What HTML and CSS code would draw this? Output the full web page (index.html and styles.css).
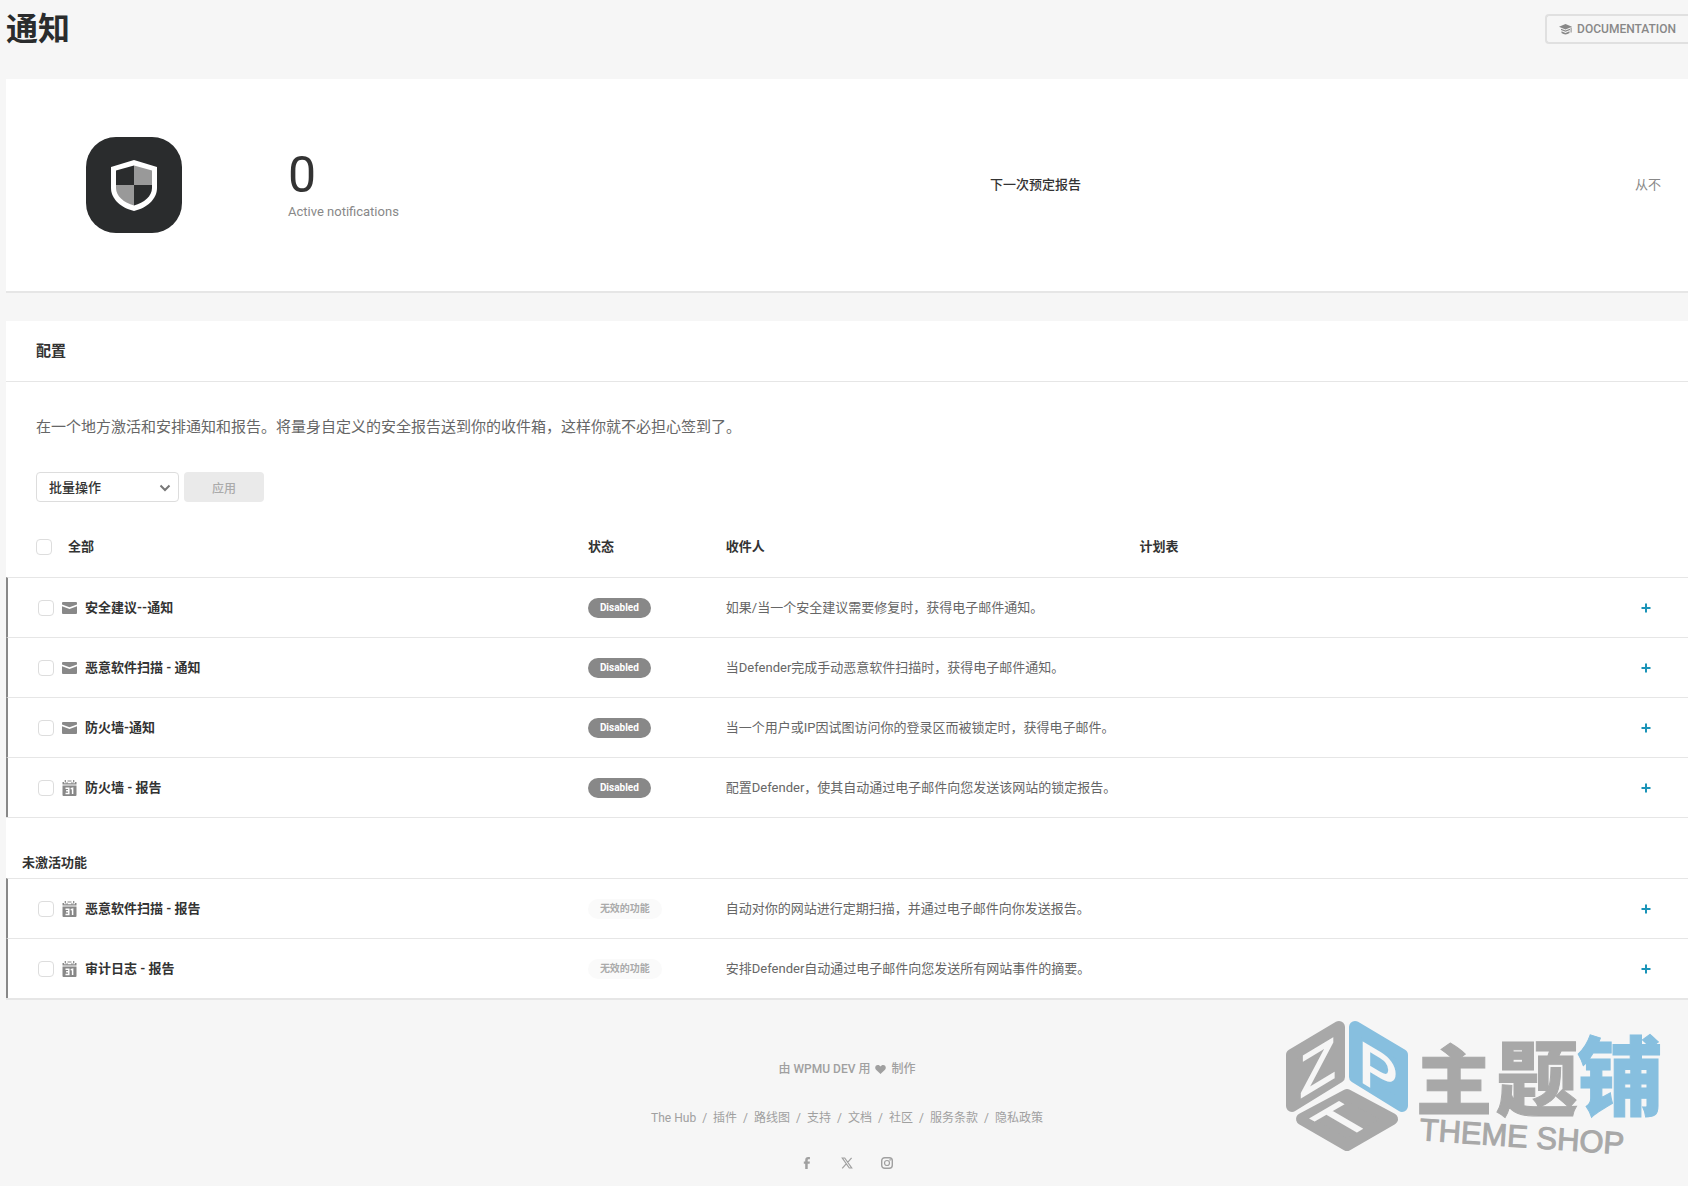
FILE: index.html
```html
<!DOCTYPE html>
<html lang="zh-CN">
<head>
  <meta charset="UTF-8">
  <meta name="viewport" content="width=device-width, initial-scale=1.0">
  <title>通知</title>
  <link rel="stylesheet" href="styles.css">
</head>
<body>
  <!-- shared icons -->
  <svg class="sprite" aria-hidden="true">
    <symbol id="icon-mail" viewBox="0 0 15 12">
      <path d="M1 0h13a1 1 0 0 1 1 1v1.600L7.500 5.200 0 2.600V1a1 1 0 0 1 1-1z"/>
      <path d="M0 4.200l7.500 2.700L15 4.200V11a1 1 0 0 1-1 1H1a1 1 0 0 1-1-1z"/>
    </symbol>
    <symbol id="icon-calendar" viewBox="0 0 14 16">
      <path d="M0 2h1.500v1.300h2.600V2H5v1.300h4V2h.9v1.300h2.600V2H14v2.500H0z"/>
      <path d="M2.200 0h1.200v2.500H2.200zM10.600 0h1.200v2.500h-1.200zM5 .6h4v1H5z"/>
      <path d="M0 5.500h14V15a1 1 0 0 1-1 1H1a1 1 0 0 1-1-1z"/>
      <path d="M3 8.200h3.300v5.200H3M3.600 10.800h2.700M8.200 8.700l1.900-.5v5.900" fill="none" stroke="#fff" stroke-width="1.500"/>
    </symbol>
    <symbol id="icon-plus" viewBox="0 0 10 10">
      <path d="M4 .5h2V4h3.500v2H6v3.500H4V6H.5V4H4z"/>
    </symbol>
  </svg>

  <header class="page-header">
    <h1>通知</h1>
    <a class="doc-button" href="#">
      <svg width="13" height="11" viewBox="0 0 13 11" aria-hidden="true">
        <path d="M6.500 0L13 2.800 6.500 5.600 0 2.800z"/>
        <path d="M2 4.700l4.500 1.900L11 4.700v1.200L6.500 7.800 2 5.900zM2.500 7.200l4 1.700 4-1.700v1.900c-2.400 1.900-5.600 1.900-8 0zM11.600 3.600h1v5h-1z"/>
      </svg>
      DOCUMENTATION
    </a>
  </header>

  <main>
    <section class="box summary">
      <svg class="summary-logo" viewBox="0 0 96 96" aria-hidden="true">
        <rect width="96" height="96" rx="30" fill="#2a2c2d"/>
        <path d="M48 23l23 7v21c0 11-10 20-23 23-13-3-23-12-23-23V30z" fill="#fff"/>
        <path d="M48 28.500V48H30V33.500z" fill="#2a2c2d"/>
        <path d="M48 28.500l18 5V48H48z" fill="#999"/>
        <path d="M30 48h18v20.500C38 66 30 59 30 51z" fill="#999"/>
        <path d="M66 48H48v20.500C58 66 66 59 66 51z" fill="#2a2c2d"/>
      </svg>
      <div class="summary-count">
        <span class="summary-large">0</span>
        <span class="summary-sub">Active notifications</span>
      </div>
      <div class="summary-next">
        <strong>下一次预定报告</strong>
        <span>从不</span>
      </div>
    </section>

    <section class="box">
      <div class="box-header">
        <h2>配置</h2>
      </div>
      <div class="box-body">
        <p>在一个地方激活和安排通知和报告。将量身自定义的安全报告送到你的收件箱，这样你就不必担心签到了。</p>
        <form class="bulk">
          <div class="select-wrap">
            <select aria-label="批量操作">
              <option>批量操作</option>
            </select>
            <svg width="12" height="8" viewBox="0 0 12 8" aria-hidden="true">
              <path d="M1.500 1.500L6 6l4.500-4.500" fill="none" stroke="#777" stroke-width="2"/>
            </svg>
          </div>
          <button class="apply" type="button" disabled>应用</button>
        </form>
      </div>

      <table class="notifications">
        <colgroup>
          <col class="col-name">
          <col class="col-status">
          <col class="col-recipients">
          <col>
        </colgroup>
        <thead>
          <tr>
            <th><label class="check-all"><input type="checkbox">全部</label></th>
            <th>状态</th>
            <th>收件人</th>
            <th>计划表</th>
          </tr>
        </thead>
        <tbody>
          <tr class="item">
            <td><label class="name"><input type="checkbox"><svg width="15" height="12" aria-hidden="true"><use href="#icon-mail"/></svg>安全建议--通知</label></td>
            <td><span class="tag">Disabled</span></td>
            <td colspan="2"><div class="detail">如果/当一个安全建议需要修复时，获得电子邮件通知。<button type="button" aria-label="添加"><svg width="10" height="10"><use href="#icon-plus"/></svg></button></div></td>
          </tr>
          <tr class="item">
            <td><label class="name"><input type="checkbox"><svg width="15" height="12" aria-hidden="true"><use href="#icon-mail"/></svg>恶意软件扫描 - 通知</label></td>
            <td><span class="tag">Disabled</span></td>
            <td colspan="2"><div class="detail">当Defender完成手动恶意软件扫描时，获得电子邮件通知。<button type="button" aria-label="添加"><svg width="10" height="10"><use href="#icon-plus"/></svg></button></div></td>
          </tr>
          <tr class="item">
            <td><label class="name"><input type="checkbox"><svg width="15" height="12" aria-hidden="true"><use href="#icon-mail"/></svg>防火墙-通知</label></td>
            <td><span class="tag">Disabled</span></td>
            <td colspan="2"><div class="detail">当一个用户或IP因试图访问你的登录区而被锁定时，获得电子邮件。<button type="button" aria-label="添加"><svg width="10" height="10"><use href="#icon-plus"/></svg></button></div></td>
          </tr>
          <tr class="item">
            <td><label class="name"><input type="checkbox"><svg width="15" height="16" aria-hidden="true"><use href="#icon-calendar"/></svg>防火墙 - 报告</label></td>
            <td><span class="tag">Disabled</span></td>
            <td colspan="2"><div class="detail">配置Defender，使其自动通过电子邮件向您发送该网站的锁定报告。<button type="button" aria-label="添加"><svg width="10" height="10"><use href="#icon-plus"/></svg></button></div></td>
          </tr>
        </tbody>
        <tbody>
          <tr class="group">
            <th colspan="4">未激活功能</th>
          </tr>
          <tr class="item">
            <td><label class="name"><input type="checkbox"><svg width="15" height="16" aria-hidden="true"><use href="#icon-calendar"/></svg>恶意软件扫描 - 报告</label></td>
            <td><span class="tag tag-inactive">无效的功能</span></td>
            <td colspan="2"><div class="detail">自动对你的网站进行定期扫描，并通过电子邮件向你发送报告。<button type="button" aria-label="添加"><svg width="10" height="10"><use href="#icon-plus"/></svg></button></div></td>
          </tr>
          <tr class="item">
            <td><label class="name"><input type="checkbox"><svg width="15" height="16" aria-hidden="true"><use href="#icon-calendar"/></svg>审计日志 - 报告</label></td>
            <td><span class="tag tag-inactive">无效的功能</span></td>
            <td colspan="2"><div class="detail">安排Defender自动通过电子邮件向您发送所有网站事件的摘要。<button type="button" aria-label="添加"><svg width="10" height="10"><use href="#icon-plus"/></svg></button></div></td>
          </tr>
        </tbody>
      </table>
    </section>
  </main>

  <footer class="page-footer">
    <p class="made-by">由 WPMU DEV 用
      <svg width="11" height="9" viewBox="0 0 11 9" aria-hidden="true"><path d="M5.500 9L1 4.800C-.6 3 .3 0 2.800 0c1.200 0 2.200.6 2.700 1.500C6 .6 7 0 8.200 0c2.500 0 3.400 3 1.800 4.800z"/></svg>
      制作</p>
    <nav class="footer-nav">
      <a href="#">The Hub</a>/<a href="#">插件</a>/<a href="#">路线图</a>/<a href="#">支持</a>/<a href="#">文档</a>/<a href="#">社区</a>/<a href="#">服务条款</a>/<a href="#">隐私政策</a>
    </nav>
    <div class="social">
      <a href="#" aria-label="Facebook"><svg width="12" height="12" viewBox="0 0 12 12"><path d="M4.200 12V6.800H2.800V4.600h1.400V3.200C4.200 1.200 5.300 0 7.200 0h1.700v2.200H7.700c-.8 0-1 .4-1 1v1.400h2.200l-.3 2.200H6.700V12z"/></svg></a>
      <a href="#" aria-label="X"><svg width="12" height="12" viewBox="0 0 12 12"><path d="M1.300 1h2.400l7 10H8.300zM10.600 .8L6.700 5.300M5.200 6.800L1.200 11.300" fill="none" stroke="currentColor" stroke-width="1.200"/></svg></a>
      <a href="#" aria-label="Instagram"><svg width="12" height="12" viewBox="0 0 12 12"><rect x=".7" y=".7" width="10.600" height="10.600" rx="3" fill="none" stroke="currentColor" stroke-width="1.400"/><circle cx="6" cy="6" r="2.500" fill="none" stroke="currentColor" stroke-width="1.200"/><circle cx="9.100" cy="2.900" r=".8"/></svg></a>
    </div>
  </footer>

  <!-- theme shop logo over the page corner -->
  <svg class="shop-logo" viewBox="0 0 390 160" width="390" height="160" role="img" aria-label="主题铺 THEME SHOP">
    <g stroke-width="12" stroke-linejoin="round">
      <path d="M59 17L12 45v51l47-29z" fill="#a8a8a8" stroke="#a8a8a8"/>
      <path d="M75 17l47 28v51L75 67z" fill="#87bfdf" stroke="#87bfdf"/>
      <path d="M67 85l45 24-45 26-45-26z" fill="#a8a8a8" stroke="#a8a8a8"/>
    </g>
    <g class="cube-letters">
      <text transform="translate(20 88) skewY(-31)">Z</text>
      <text transform="translate(79 70) skewY(31)">P</text>
      <text transform="matrix(.86 -.5 .86 .5 64 129)">T</text>
    </g>
    <g class="shop-name">
      <text x="136" y="99" font-size="76">主</text>
      <text x="216" y="99" font-size="82">题</text>
      <text class="blue" x="297" y="99" font-size="86">铺</text>
    </g>
    <text class="shop-sub" transform="translate(139 130) rotate(4)">THEME SHOP</text>
  </svg>
</body>
</html>
```
FILE: styles.css
```css
* {
  box-sizing: border-box;
}

body {
  position: relative;
  margin: 0;
  padding-left: 6px;
  background: #f6f6f6;
  color: #666;
  font-family: Roboto, "Noto Sans CJK SC", sans-serif;
  font-size: 13px;
  line-height: 20px;
}

h1, h2, p {
  margin: 0;
}

a {
  color: inherit;
  text-decoration: none;
}

svg {
  display: block;
  flex-shrink: 0;
  fill: currentColor;
}

button, select {
  font-family: inherit;
}

.sprite {
  position: absolute;
  width: 0;
  height: 0;
}

/* header */
.page-header {
  display: flex;
  justify-content: space-between;
  align-items: flex-start;
  height: 79px;
}

.page-header h1 {
  padding-top: 9px;
  color: #2a2c2d;
  font-size: 32px;
  line-height: 40px;
}

.doc-button {
  display: flex;
  align-items: center;
  gap: 5px;
  height: 30px;
  margin-top: 14px;
  padding: 0 12px;
  border: 2px solid #e0e0e0;
  border-right: 0;
  border-radius: 4px 0 0 4px;
  color: #888;
  font-size: 12px;
  font-weight: 500;
}

/* boxes */
.box {
  margin-bottom: 30px;
  background: #fff;
  box-shadow: 0 2px 0 #e6e6e6;
}

.summary {
  display: flex;
  align-items: center;
  height: 212px;
  padding: 0 27px 0 80px;
}

.summary-logo {
  width: 96px;
  height: 96px;
}

.summary-count {
  display: flex;
  flex: 1;
  flex-direction: column;
  padding-left: 106px;
}

.summary-large {
  color: #333;
  font-size: 50px;
  line-height: 54px;
}

.summary-sub {
  color: #888;
}

.summary-next {
  display: flex;
  justify-content: space-between;
  width: 42.6%;
  color: #888;
}

.summary-next strong {
  color: #333;
  font-weight: 500;
}

.box-header {
  padding: 20px 30px;
  border-bottom: 1px solid #e6e6e6;
}

.box-header h2 {
  color: #333;
  font-size: 15px;
  line-height: 20px;
}

.box-body {
  padding: 30px 30px 15px;
}

.box-body p {
  font-size: 15px;
  line-height: 30px;
}

/* bulk actions */
.bulk {
  display: flex;
  gap: 5px;
  margin-top: 30px;
}

.select-wrap {
  position: relative;
  width: 143px;
}

.select-wrap svg {
  position: absolute;
  top: 12px;
  right: 8px;
  pointer-events: none;
}

.bulk select {
  width: 100%;
  height: 30px;
  padding: 0 12px;
  border: 1px solid #ddd;
  border-radius: 4px;
  background: #fff;
  color: #333;
  font-size: 13px;
  font-weight: 500;
  appearance: none;
}

.apply {
  width: 80px;
  height: 30px;
  border: 0;
  border-radius: 4px;
  background: #eaeaea;
  color: #aaa;
  font-size: 12px;
  font-weight: 500;
}

/* notification table */
.notifications {
  width: 100%;
  border-spacing: 0;
  table-layout: fixed;
}

.col-name {
  width: 34%;
}

.col-status {
  width: 8.2%;
}

.col-recipients {
  width: 24.6%;
}

.notifications th,
.notifications td {
  padding: 0 10px;
  text-align: left;
}

.notifications th {
  color: #333;
  font-weight: 700;
}

.notifications thead th {
  height: 60px;
}

.notifications thead th:first-child {
  padding-left: 30px;
}

.notifications .item td {
  height: 60px;
  border-top: 1px solid #e6e6e6;
}

.notifications .item td:first-child {
  padding-left: 30px;
  border-left: 2px solid #888;
}

.notifications .group th {
  height: 61px;
  padding: 0 16px 5px;
  border-top: 1px solid #e6e6e6;
  vertical-align: bottom;
}

.check-all,
.name,
.detail {
  display: flex;
  align-items: center;
}

.check-all {
  gap: 16px;
}

.name {
  gap: 8px;
  color: #333;
  font-weight: 700;
}

.name svg {
  color: #888;
}

input[type="checkbox"] {
  width: 16px;
  height: 16px;
  margin: 0;
  border: 1px solid #ddd;
  border-radius: 4px;
  background: #fff;
  appearance: none;
}

.detail {
  justify-content: space-between;
}

.detail button {
  margin-right: 21px;
  padding: 6px;
  border: 0;
  background: none;
  color: #1a94b8;
}

.tag {
  display: inline-block;
  padding: 0 12px;
  border-radius: 10px;
  background: #888;
  color: #fff;
  font-size: 10px;
  font-weight: 700;
  vertical-align: middle;
}

.tag-inactive {
  background: #fafafa;
  color: #aaa;
}

/* footer */
.page-footer {
  display: flex;
  flex-direction: column;
  align-items: center;
  padding: 31px 0 17px;
  color: #a0a0a0;
  font-size: 12px;
}

.made-by {
  display: flex;
  align-items: center;
  gap: 5px;
  font-weight: 500;
}

.footer-nav {
  display: flex;
  gap: 6px;
  margin-top: 29px;
}

.social {
  display: flex;
  gap: 28px;
  margin-top: 29px;
}

/* shop logo */
.shop-logo {
  position: absolute;
  right: 18px;
  bottom: 16px;
  pointer-events: none;
}

.cube-letters {
  fill: #f6f6f6;
  stroke: #f6f6f6;
  stroke-width: 2px;
  font-family: "Liberation Sans", sans-serif;
  font-size: 58px;
}

.shop-name {
  fill: #a8a8a8;
  stroke: #a8a8a8;
  stroke-width: 1px;
  font-family: "Noto Sans CJK SC", sans-serif;
  font-weight: 900;
}

.shop-name .blue {
  fill: #87bfdf;
  stroke: #87bfdf;
}

.shop-sub {
  fill: #a8a8a8;
  stroke: #a8a8a8;
  stroke-width: 1px;
  font-family: "Liberation Sans", sans-serif;
  font-size: 31px;
}
```
